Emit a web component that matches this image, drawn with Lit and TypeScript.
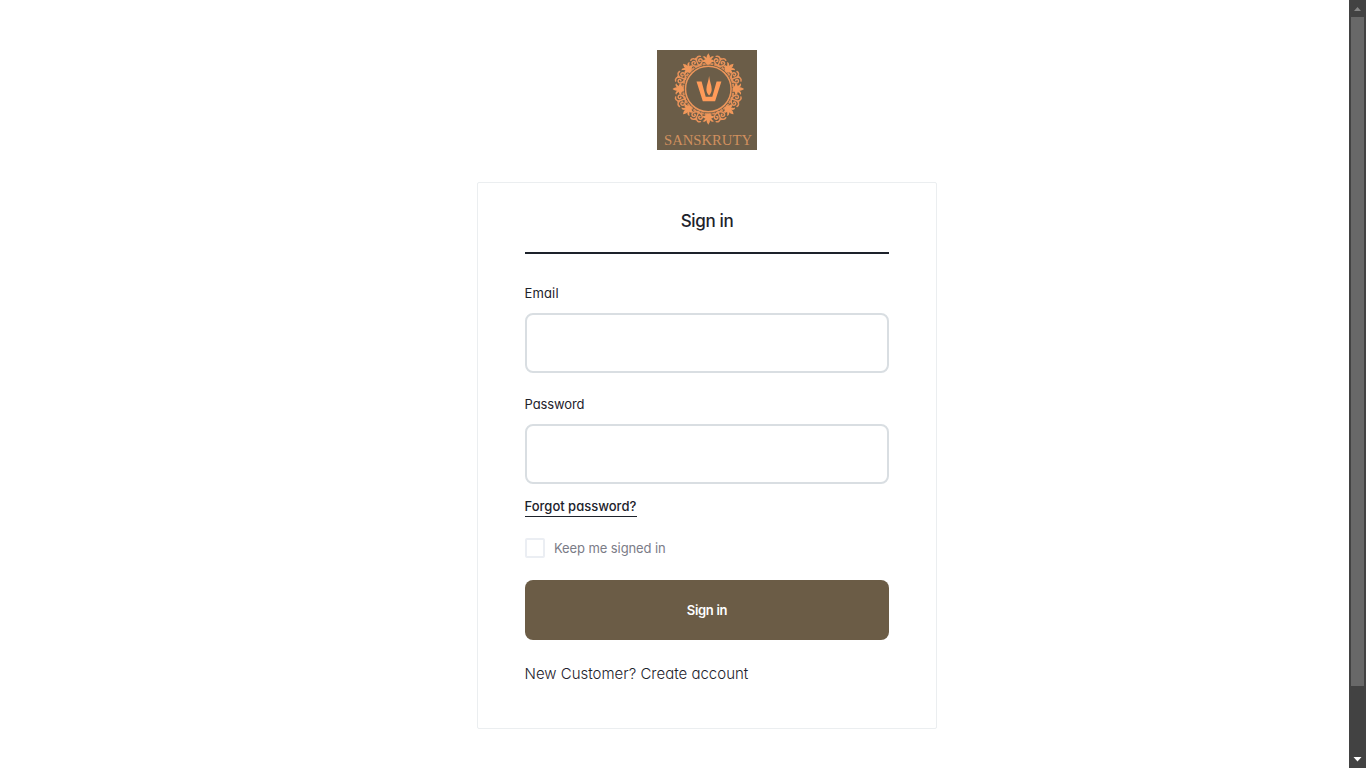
import { LitElement, html, svg, css } from "lit";
import { customElement } from "lit/decorators.js";

const turns = (count: number, offset = 0) =>
  Array.from({ length: count }, (_, i) => offset + (i * 360) / count);

@customElement("brand-logo")
class BrandLogo extends LitElement {
  static styles = css`
    :host { display: block; width: 100px; height: 100px; }
    svg { display: block; }
    .name { font: 14px "Liberation Serif", serif; fill: #d0905f; }
  `;
  render() {
    return html`<svg width="100" height="100" viewBox="0 0 100 100">
      <rect width="100" height="100" fill="#6b5d48" />
      <g transform="translate(51.3 39)">
        <circle r="22.8" fill="none" stroke="#ec955a" stroke-width="1.5" />
        <circle r="25.2" fill="none" stroke="#d98a55" stroke-width="2" stroke-dasharray="3.2 .8" />
        ${turns(8).map((a) => svg`<g transform="rotate(${a})" fill="#f0975a">
          <path d="M0-35.8C1.2-33.6 2.1-32.6 1.5-31C3-33 4.8-33.4 5.8-32C4.4-31.8 3.8-30.4 2.8-29.4C4.6-29.6 5.8-28.4 5.6-26.6C4-27.6 2.5-26.2 1.5-24.6H-1.5C-2.5-26.2-4-27.6-5.6-26.6C-5.8-28.4-4.6-29.6-2.8-29.4C-3.8-30.4-4.4-31.8-5.8-32C-4.8-33.4-3-33-1.5-31C-2.1-32.6-1.2-33.6 0-35.8Z" />
        </g>`)}
        ${turns(8, 22.5).map((a) => svg`<g transform="rotate(${a})" fill="none" stroke="#e8925a" stroke-width="1.5" stroke-linecap="round">
          <path d="M0-25C-5.4-26-6.8-30-4-31C-1.6-31.2-1.3-28.6-3-28.6M0-25C5.4-26 6.8-30 4-31C1.6-31.2 1.3-28.6 3-28.6M0-26V-33M0-31C-1-34-3.6-34.6-5.2-33.2M0-31C1-34 3.6-34.6 5.2-33.2" />
        </g>`)}
      </g>
      <path d="M39.5 31.5H44.6L48.7 46.7H55.3L59.6 31.5H64.4L58.1 51.2H45.8Z" fill="#ff9b59" />
      <path d="M52.1 26C52.5 31 54.7 35 54.7 39.3C54.7 42 53.9 43.4 52.1 45.6C50.1 43.4 49.4 42 49.4 39.3C49.4 35 51.7 31 52.1 26Z" fill="#ff9b59" />
      <text class="name" x="7" y="95.4" textLength="88" lengthAdjust="spacingAndGlyphs">SANSKRUTY</text>
    </svg>`;
  }
}

@customElement("app-root")
class AppRoot extends LitElement {
  static styles = css`
    :host { display: flex; height: 768px; overflow: hidden; background: #fff; color: #1d222b;
      font-family: Inter, Lato, sans-serif; font-feature-settings: "cv11" 1, "ss03" 1; }
    * { box-sizing: border-box; }
    .page { flex: 1; display: flex; flex-direction: column; align-items: center; padding: 50px 0 0 65px; }
    .card { width: 460px; height: 547px; margin-top: 32px; padding: 0 47px; border: 1px solid #ebeef0; border-radius: 2px; }
    .title { height: 71px; margin: 0; padding-top: 26px; text-align: center; border-bottom: 2px solid #1d222b;
      font-size: 17px; line-height: 24px; font-weight: 450; letter-spacing: -.35px; }
    form { display: flex; flex-direction: column; align-items: flex-start; padding-top: 29px; }
    label { font-size: 13px; line-height: 20px; letter-spacing: -.1px; text-indent: -.5px; }
    .wide { letter-spacing: .15px; }
    .field { width: 364px; height: 60px; border: 2px solid #d9dee2; border-radius: 8px; background: #fff;
      margin: 10px 0 21px; padding: 0 16px; outline: 0; font: inherit; }
    .field.last { margin-bottom: 13px; }
    .forgot { font-size: 13px; font-weight: 500; line-height: 19px; height: 20px; border-bottom: 1px solid #1d222b;
      width: 112px; white-space: nowrap; letter-spacing: 0; text-indent: -.5px; }
    .keep { display: flex; align-items: center; gap: 9px; margin-top: 21px; height: 20px; color: #7b7c87; white-space: nowrap; text-indent: 0; }
    .box { width: 20px; height: 20px; border: 2px solid #ebeef3; border-radius: 2px; }
    .submit { width: 364px; height: 60px; margin-top: 22px; border: 0; border-radius: 8px; background: #6b5c46;
      color: #fff; font: inherit; font-size: 13px; font-weight: 600; letter-spacing: -.3px; }
    .join { margin: 22px 0 0; font-size: 15px; line-height: 24px; font-weight: 340; white-space: nowrap;
      letter-spacing: 0; text-indent: -.5px; }
    .scroll { width: 17px; background: #424242; display: flex; flex-direction: column; align-items: center; }
    .thumb { width: 13px; height: 669px; background: #686868; }
    .arrow { width: 17px; height: 17px; display: block; }
    .down { margin-top: auto; }
  `;
  render() {
    return html`
      <main class="page">
        <brand-logo></brand-logo>
        <section class="card">
          <h1 class="title">Sign in</h1>
          <form>
            <label class="wide" for="email">Email</label>
            <input class="field" id="email" type="email" />
            <label for="password">Password</label>
            <input class="field last" id="password" type="password" />
            <a class="forgot">Forgot password?</a>
            <label class="keep"><span class="box"></span><span>Keep me signed in</span></label>
            <button class="submit" type="button">Sign in</button>
            <p class="join">New Customer? Create account</p>
          </form>
        </section>
      </main>
      <div class="scroll">
        <svg class="arrow" viewBox="0 0 17 17"><path d="M5 11L8.5 7L12 11Z" fill="#868686" /></svg>
        <div class="thumb"></div>
        <svg class="arrow down" viewBox="0 0 17 17"><path d="M4.5 6L8.5 10.5L12.5 6Z" fill="#fff" /></svg>
      </div>`;
  }
}
